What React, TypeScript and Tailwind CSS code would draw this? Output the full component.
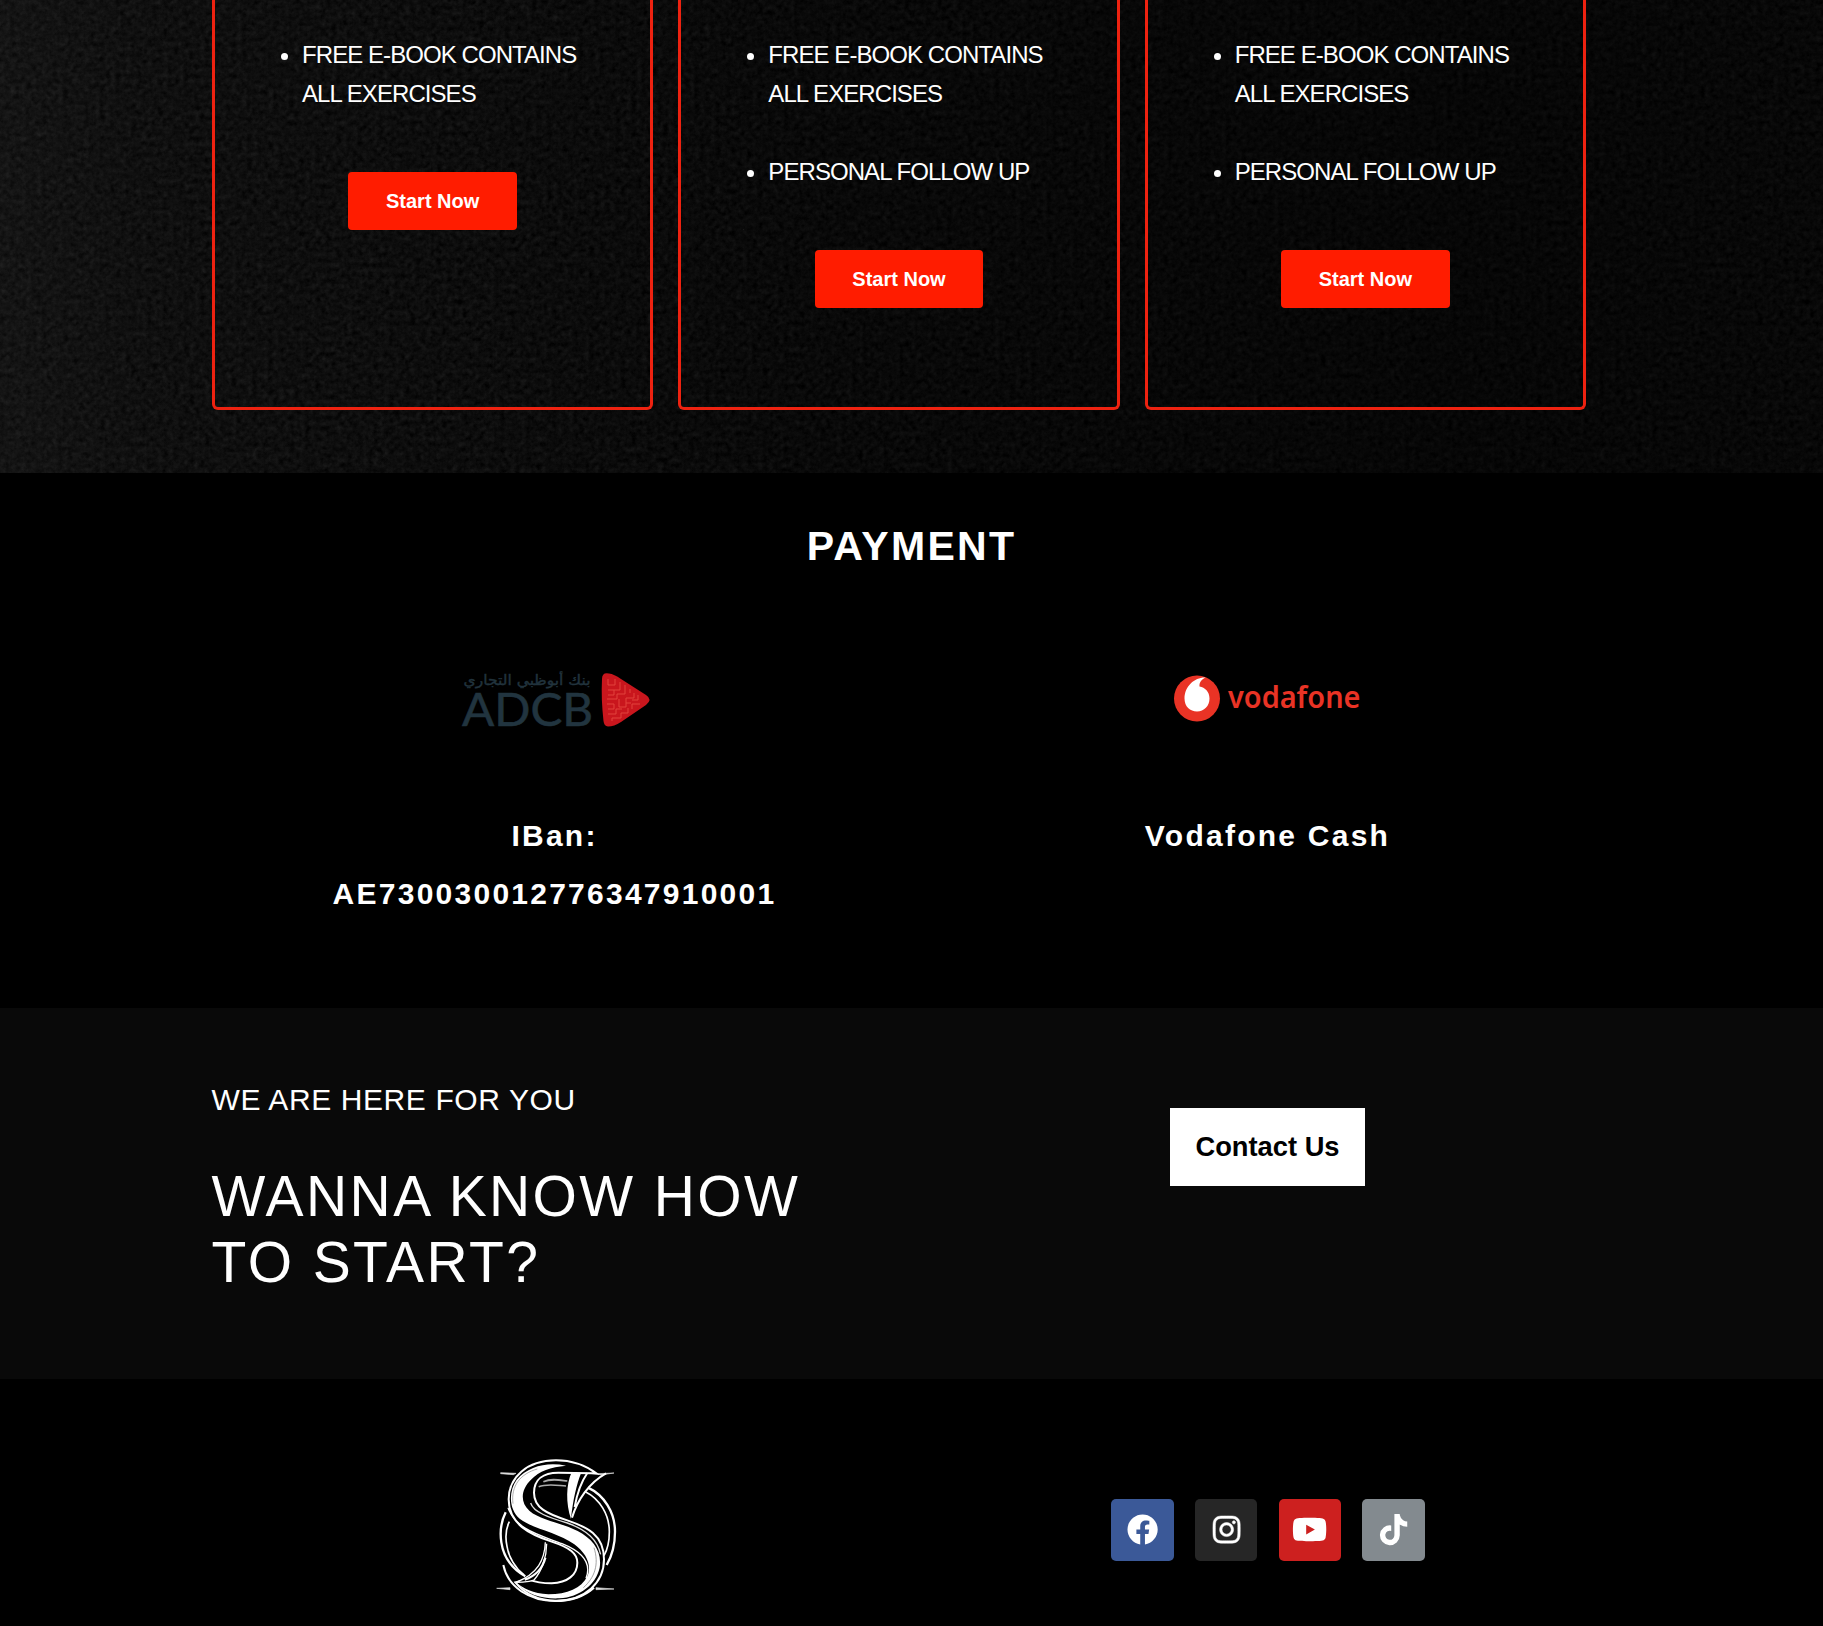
import React from "react";
import { FaFacebook, FaInstagram, FaYoutube, FaTiktok } from "react-icons/fa";

function Texture() {
  return (
    <>
      <svg className="absolute inset-0 h-full w-full" aria-hidden="true">
        <filter id="grain" x="0" y="0" width="100%" height="100%" colorInterpolationFilters="sRGB">
          <feTurbulence type="fractalNoise" baseFrequency="0.19" numOctaves="5" seed="11" />
          <feColorMatrix values="0.09 0.07 0 0 -0.038  0.09 0.07 0 0 -0.038  0.09 0.07 0 0 -0.038  0 0 0 0 1" />
        </filter>
        <rect width="100%" height="100%" filter="url(#grain)" />
      </svg>
      <div className="absolute inset-0 bg-[linear-gradient(90deg,rgba(255,255,255,0.04)_0%,rgba(255,255,255,0.02)_8%,rgba(255,255,255,0.008)_25%,rgba(0,0,0,0.2)_45%,rgba(0,0,0,0.42)_80%,rgba(0,0,0,0.3)_100%)]" />
    </>
  );
}

function PlanCard({ items }: { items: React.ReactNode[] }) {
  return (
    <div className="flex h-[410px] flex-col items-center rounded-b-[6px] border-3 border-t-0 border-[#ee2210] pt-[35px]">
      <ul className="w-full list-disc space-y-[39px] pl-[87px] text-[24px] leading-[39px] tracking-[-0.93px]">
        {items.map((item, i) => (
          <li key={i}>{item}</li>
        ))}
      </ul>
      <button className="mt-[59px] h-[57.5px] w-[168.5px] rounded-[4px] bg-[#ff1c00] text-[20px] font-bold">
        Start Now
      </button>
    </div>
  );
}

function AdcbLogo() {
  return (
    <svg width="210" height="90" viewBox="0 0 210 90" className="font-normal tracking-normal" role="img" aria-label="ADCB">
      <text x="139.500" y="29.500" direction="rtl" textLength="127" lengthAdjust="spacingAndGlyphs" fill="#21333d" stroke="#21333d" strokeWidth="0.4" fontFamily="'DejaVu Sans', sans-serif" fontSize="14">
        بنك أبوظبي التجاري
      </text>
      <text x="11" y="71" textLength="131" lengthAdjust="spacingAndGlyphs" fill="#21343f" stroke="#21343f" strokeWidth="0.6" fontFamily="Lato, sans-serif" fontSize="45.500">
        ADCB
      </text>
      <path d="M151 24 Q151 17 158 18.500 Q163 19 170 24 L195 40 Q202 44.500 195 50 L170 67 Q163 71.500 157 71.500 Q153 71 152.500 66 Q150 44 151 24Z" fill="#c9161d" />
      <path
        d="M157 24v6h7v-6M157 35h6v5h-6M169 27v8h-6M174 30v9h-8v5h-10M156 49h7v5h-6M168 44v8h7v-9h8v-5M179 34v4M157 59h8v-5h6M161 66v-3h9v-5h7v-5M181 54v-5h8M187 40v5h-6M175 48h5"
        fill="none"
        stroke="#e2423c"
        strokeWidth="1"
      />
    </svg>
  );
}

function VodafoneLogo() {
  return (
    <svg width="210" height="80" viewBox="0 0 210 80" className="tracking-normal" role="img" aria-label="vodafone">
      <circle cx="37" cy="38.500" r="23" fill="#e93325" />
      <path d="M45.500 17.500 C35 17 24.500 26 24.500 38.500 C24.500 46.500 30 51.500 37 51.500 C44 51.500 49.500 46 49.500 38.500 C49.500 31.500 45 27.500 39.500 26.500 C39 22.500 42 19 45.500 17.500Z" fill="#fff" />
      <text x="68" y="48.200" textLength="132.500" lengthAdjust="spacingAndGlyphs" fill="#e93325" fontFamily="'Noto Sans', sans-serif" fontSize="30.500" fontWeight="600">
        vodafone
      </text>
    </svg>
  );
}

function Monogram() {
  return (
    <svg width="150" height="180" viewBox="0 0 450 540" fill="none" stroke="#fff" role="img" aria-label="S">
      <g strokeWidth="7">
        <path d="M324 140 C372 162 405 214 405 272 C405 310 396 344 380 372" />
        <path d="M77 214 C62 244 60 278 64 304 C70 344 94 382 136 406" />
      </g>
      <g strokeWidth="5">
        <path d="M316 152 C360 174 388 222 388 272 C388 302 382 326 372 344" />
        <path d="M88 242 C78 262 76 292 81 316 C86 348 106 382 132 402" />
      </g>
      <path d="M62 95 L108 97 L100 101 L62 98Z M352 98 L402 96 L362 102Z M50 442 L90 440 L90 446Z M348 440 L402 444 L348 446Z" fill="#ddd" stroke="#ddd" strokeWidth="2" />
      <path
        d="M350 98 C310 68 262 58 228 58 C140 58 86 110 86 175 C86 250 150 280 215 302 C270 320 292 338 292 365 C292 402 262 425 215 427 C185 427 165 423 146 415 L106 424 C140 466 185 479 230 479 C315 479 372 425 372 355 C372 280 320 258 262 238 C200 218 162 200 162 155 C162 115 190 95 235 95 L335 97Z"
        fill="#000"
        strokeWidth="6"
      />
      <path
        d="M258 74 C205 62 146 74 110 116 C85 152 86 205 120 234 C164 266 234 274 283 310 C320 338 336 372 322 406 C304 442 262 460 205 460 C160 458 128 442 108 424 C142 464 190 474 238 472 C300 468 348 430 359 380 C367 330 338 294 293 270 C236 242 182 238 148 209 C120 184 122 146 153 116 C178 90 212 78 258 74Z"
        fill="#fff"
        stroke="none"
      />
      <path d="M99 188 C92 134 122 98 172 84" stroke="#888" strokeWidth="2" />
      <path d="M342 320 C358 370 344 410 310 440" stroke="#777" strokeWidth="2" />
      <path d="M84 200 C108 268 186 284 246 308 C306 332 336 366 318 412" strokeWidth="4" />
      <path d="M152 186 C160 214 208 230 262 246 C322 268 352 296 362 340" stroke="#ddd" strokeWidth="4" />
      <path d="M70 372 C84 440 150 480 225 480 C270 480 312 467 342 440" strokeWidth="6" />
      <path d="M275 94 L303 97 C290 130 279 176 273 234 C257 188 258 130 275 94Z" fill="#fff" stroke="none" />
      <path d="M322 96 C300 128 290 164 284 198 M276 230 C292 178 326 126 378 97" strokeWidth="6" />
      <path d="M176 137 C202 127 230 133 258 135 M190 122 C214 112 236 117 262 120" stroke="#aaa" strokeWidth="5" />
      <path d="M196 304 C194 356 174 398 108 424 C140 424 162 418 162 417 C184 392 200 350 200 308" fill="#000" strokeWidth="4" />
      <path d="M196 350 C188 382 164 406 134 416" strokeWidth="7" />
    </svg>
  );
}

const socials = [
  { name: "Facebook", Icon: FaFacebook, bg: "bg-[#3b5998]", size: 31.2, stroke: 0 },
  { name: "Instagram", Icon: FaInstagram, bg: "bg-[#262626]", size: 31.2, stroke: 8 },
  { name: "YouTube", Icon: FaYoutube, bg: "bg-[#cd201f]", size: 35.2, stroke: 0 },
  { name: "TikTok", Icon: FaTiktok, bg: "bg-[#838a8f]", size: 31.2, stroke: 0 },
];

export default function App() {
  const ebook = (
    <>
      FREE E-BOOK CONTAINS
      <br />
      ALL EXERCISES
    </>
  );
  return (
    <div className="flex h-[1626px] w-[1823px] flex-col overflow-hidden bg-black font-['Liberation_Sans',Arial,sans-serif] text-white">
      <section className="relative h-[473px] shrink-0 overflow-hidden bg-[#0a0a0a]">
        <Texture />
        <div className="relative ml-[212px] grid w-[1374px] grid-cols-3 gap-[25px]">
          <PlanCard items={[ebook]} />
          <PlanCard items={[ebook, "PERSONAL FOLLOW UP"]} />
          <PlanCard items={[ebook, "PERSONAL FOLLOW UP"]} />
        </div>
      </section>

      <section className="h-[535px] shrink-0 pt-[43px]">
        <h2 className="text-center text-[41px] leading-[60px] font-bold tracking-[2.3px]">PAYMENT</h2>
        <div className="mx-auto grid w-[1424px] grid-cols-2 pt-[79px] text-center text-[30px] leading-[58px] font-bold tracking-[2.25px]">
          <div className="flex flex-col items-center">
            <AdcbLogo />
            <p className="mt-[62px] -ml-[2px]">
              IBan:
              <br />
              AE730030012776347910001
            </p>
          </div>
          <div className="flex flex-col items-center pt-[5px]">
            <div className="-ml-[5px]">
              <VodafoneLogo />
            </div>
            <p className="mt-[67px]">Vodafone Cash</p>
          </div>
        </div>
      </section>

      <section className="h-[371px] shrink-0 bg-[#090909]">
        <div className="mx-auto grid w-[1424px] grid-cols-2">
          <div className="pt-[72px] pl-[12px]">
            <p className="text-[30px] leading-[40px] tracking-[0.6px]">WE ARE HERE FOR YOU</p>
            <h2 className="mt-[43px] text-[57px] leading-[66px] tracking-[2.4px]">
              WANNA KNOW HOW
              <br />
              TO START?
            </h2>
          </div>
          <div className="flex justify-center pt-[100px]">
            <button className="h-[78px] w-[195px] bg-white text-[27.3px] font-bold text-black">Contact Us</button>
          </div>
        </div>
      </section>

      <footer className="mx-auto grid w-[1424px] grow grid-cols-2">
        <div className="flex justify-center pt-[62px] pr-[2px]">
          <Monogram />
        </div>
        <div className="flex justify-center gap-[21.3px] pt-[119.5px] pl-[1px]">
          {socials.map(({ name, Icon, bg, size, stroke }) => (
            <a key={name} aria-label={name} className={`flex size-[62.500px] items-center justify-center rounded-[5px] ${bg}`}>
              <Icon size={size} strokeWidth={stroke} className="overflow-visible" />
            </a>
          ))}
        </div>
      </footer>
    </div>
  );
}
